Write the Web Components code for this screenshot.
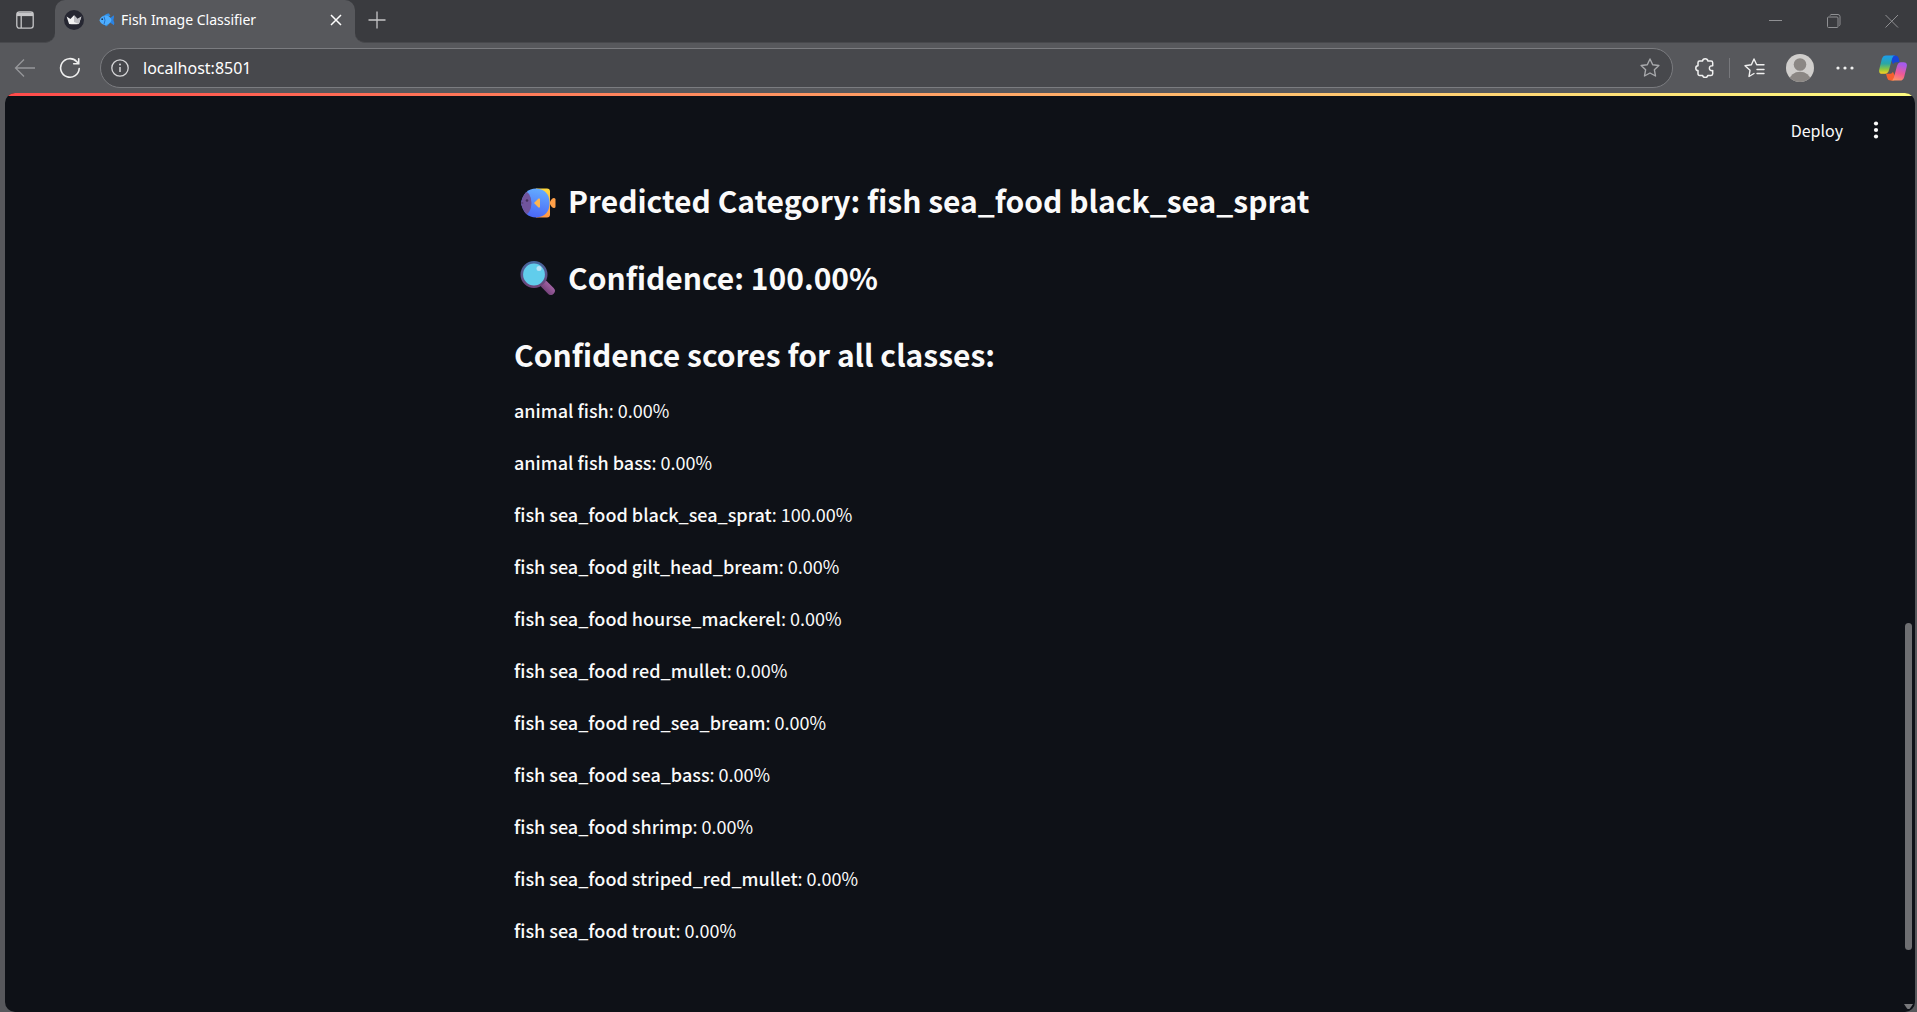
<!DOCTYPE html>
<html lang="en">
<head>
<meta charset="utf-8">
<title>Fish Image Classifier</title>
<style>
  html, body { margin: 0; height: 100%; }
  body { background: #57585c; overflow: hidden; }
</style>
</head>
<body>
<browser-window></browser-window>

<template id="tpl-window">
  <style>
    :host { display: flex; flex-direction: column; height: 100vh; background: #57585c; }
    app-view { flex: 1; min-height: 0; }
  </style>
  <tab-strip></tab-strip>
  <address-bar></address-bar>
  <app-view>
    <result-heading icon="fish">Predicted Category: fish sea_food black_sea_sprat</result-heading>
    <result-heading icon="lens">Confidence: 100.00%</result-heading>
    <result-heading>Confidence scores for all classes:</result-heading>
    <score-list></score-list>
  </app-view>
</template>

<template id="tpl-tabs">
  <style>
    :host { display: flex; height: 43px; background: #57585c; font: 14px/20px "Noto Sans", "Open Sans", sans-serif; color: #fff; }
    button { border: 0; padding: 0; background: none; color: inherit; display: flex; align-items: center; justify-content: center; }
    svg { display: block; flex: none; }
    .left, .right { background: #3a3b3f; box-sizing: border-box; border-bottom: 1px solid #48494d; display: flex; }
    .left { width: 55px; border-bottom-right-radius: 10px; padding: 11px 0 0 16px; align-items: flex-start; }
    .right { flex: 1; border-bottom-left-radius: 10px; justify-content: space-between; align-items: flex-start; }
    .slot { width: 300px; background: linear-gradient(#3a3b3f 50%, #57585c 50%); }
    .tab { height: 100%; box-sizing: border-box; background: #57585c; border-radius: 10px 10px 0 0; display: flex; align-items: center; padding: 0 10px 4px 9px; }
    .tab span { flex: 1; margin-left: 6px; white-space: nowrap; }
    .tab .fish { margin-left: 15px; }
    .plus { margin: 10px 0 0 12px; }
    .controls { display: flex; gap: 44px; padding: 14px 18px 0 0; color: #8f9093; }
  </style>
  <div class="left"><button aria-label="Tab actions">
    <svg width="18" height="18" viewBox="0 0 18 18" fill="none" stroke="#c6c6c8" stroke-width="1.3"><rect x=".8" y=".8" width="16.4" height="16.4" rx="2.6"/><path d="M1 1.5h16v3.6H1z" fill="#c6c6c8" stroke="none"/><path d="M5.2 5v12"/></svg>
  </button></div>
  <div class="slot"><div class="tab">
    <svg width="20" height="20" viewBox="0 0 20 20"><circle cx="10" cy="10" r="10" fill="#262732"/><path d="M2.6 6.6 6.4 9 10 5.2 13.6 9l3.8-2.4-2.5 7.3q-4.9.8-9.8 0z" fill="#f2f2f2"/><path d="m10 5.2 3.6 3.8 3.8-2.4-2.5 7.3-4.9-2z" fill="#bdbdc2"/></svg>
    <svg class="fish" width="16" height="14" viewBox="0 0 16 14"><path d="M5 3Q7 0 10 .6L11.500 3M5 11l2 2.600 3-2" fill="#2f8ee5"/><path d="m10 6 4.800-3.800Q15.500 4 14.400 7q1.400 2.600.5 5.200L10 8.800z" fill="#2b83e2"/><path d="M.4 7.300Q2 2.500 7 2.600q4 .2 5.500 4.500-1.500 4.600-5.500 4.900-5 .1-6.600-4.700" fill="#4daeff"/><path d="M5 3.500q2 3.700 0 7.800" stroke="#2470c8" fill="none"/><circle cx="3.200" cy="6.200" r=".9" fill="#173454"/></svg>
    <span>Fish Image Classifier</span>
    <button aria-label="Close tab"><svg width="18" height="18" viewBox="0 0 18 18" stroke="#fff" stroke-width="1.500"><path d="m4 4 10 10M14 4 4 14"/></svg></button>
  </div></div>
  <div class="right">
    <button class="plus" aria-label="New tab"><svg width="20" height="20" viewBox="0 0 20 20" stroke="#c6c6c8" stroke-width="1.300"><path d="M10 1.500v17M1.500 10h17"/></svg></button>
    <div class="controls">
      <button aria-label="Minimize"><svg width="14" height="14" viewBox="0 0 14 14" stroke="currentColor"><path d="M0 6.500h13"/></svg></button>
      <button aria-label="Restore"><svg width="14" height="14" viewBox="0 0 14 14" fill="none" stroke="currentColor"><rect x=".5" y="3" width="10.500" height="10.500" rx="1"/><path d="M3 1.500q0-.5 1-1h7q2 .2 2 2v8q0 1-1 1"/></svg></button>
      <button aria-label="Close window"><svg width="14" height="14" viewBox="0 0 14 14" stroke="currentColor"><path d="m.5 1 12.500 12.500M13 1 .5 13.500"/></svg></button>
    </div>
  </div>
</template>

<template id="tpl-address">
  <style>
    :host { display: flex; align-items: center; height: 50px; padding: 0 10px 0 14px; font: 16px/24px "Noto Sans", "Open Sans", sans-serif; color: #fff; }
    button { border: 0; padding: 0; background: none; color: inherit; display: flex; flex: none; }
    svg { display: block; flex: none; }
    .reload { margin: 0 19px 0 23px; }
    .box { flex: 1; display: flex; align-items: center; height: 40px; box-sizing: border-box; border: 1px solid #7b7c80; border-radius: 20px; background: #47484c; padding: 0 12px 0 10px; }
    label { display: flex; flex: 1; align-items: center; gap: 14px; }
    input { flex: 1; min-width: 0; border: 0; padding: 0; background: none; color: #fff; font: inherit; outline: 0; height: 24px; }
    .tools { display: flex; align-items: center; margin-left: 22px; }
    .rule { width: 1px; height: 20px; background: #77787c; margin: 0 14px; }
    .avatar { margin: 0 22px 0 21px; }
    .more { margin-right: 25px; }
  </style>
  <button aria-label="Back"><svg width="22" height="20" viewBox="0 0 22 20" fill="none" stroke="#96979a" stroke-width="1.300"><path d="M21 10H1.500M10 1.500 1.500 10l8.500 8.500"/></svg></button>
  <button class="reload" aria-label="Reload"><svg width="22" height="22" viewBox="0 0 22 22" fill="none" stroke="#f0f0f0" stroke-width="1.600" stroke-linecap="round"><path d="M20.200 11.500A9.300 9.300 0 1 1 17.800 4.700l1.800 2M19.700 1.800v5h-5"/></svg></button>
  <div class="box">
    <label><svg width="18" height="18" viewBox="0 0 18 18" fill="none" stroke="#d6d6d8" stroke-width="1.300" role="img" aria-label="Address"><circle cx="9" cy="9" r="8.200"/><path d="M9 8v5" stroke-width="1.500"/><circle cx="9" cy="5.500" r="1" fill="#d6d6d8" stroke="none"/></svg>
    <input type="text" value="localhost:8501" spellcheck="false"></label>
    <button aria-label="Add to favorites"><svg width="20" height="20" viewBox="0 0 20 20" fill="none" stroke="#a8a9ac" stroke-width="1.400" stroke-linejoin="round"><path d="m10 1 2.700 5.700 6.200.8-4.500 4.300 1.100 6.200L10 15l-5.500 3 1.100-6.200L1.100 7.500l6.200-.8z"/></svg></button>
  </div>
  <div class="tools">
    <button aria-label="Extensions"><svg width="20" height="20" viewBox="0 0 20 20" fill="none" stroke="#f0f0f0" stroke-width="1.500" stroke-linejoin="round"><path d="M4.500 3H7.600q.2-2.200 2.600-2.200T12.800 3H16q1.700 0 1.700 1.700v3.100q-3.300-.3-3.300 2.400t3.300 2.400v3.100q0 1.700-1.700 1.700h-3.200q-.2 2.100-2.600 2.100t-2.600-2.100H4.700q-1.700 0-1.700-1.700v-3.100Q.8 12.500.8 10.200T3 7.800V4.700Q3 3 4.500 3z"/></svg></button>
    <span class="rule"></span>
    <button aria-label="Favorites"><svg width="21" height="20" viewBox="0 0 21 20" fill="none" stroke="#f0f0f0" stroke-width="1.400" stroke-linejoin="round" stroke-linecap="round"><path d="M10 15.500 5 18.500l1-6.200L1 7.700l6.400-.9L10 1l2.700 5.800h7.300M13 11.500h7M13 15.500h7"/></svg></button>
    <button class="avatar" aria-label="Profile"><svg width="28" height="28" viewBox="0 0 28 28"><clipPath id="round"><circle cx="14" cy="14" r="14"/></clipPath><g clip-path="url(#round)"><path d="M0 0h28v28H0z" fill="#d0cecc"/><circle cx="14" cy="10.500" r="6.300" fill="#8b8784"/><ellipse cx="14" cy="26" rx="10.500" ry="8.300" fill="#8b8784"/></g></svg></button>
    <button class="more" aria-label="Settings and more"><svg width="18" height="6" viewBox="0 0 18 6" fill="#f0f0f0"><circle cx="2" cy="3" r="1.600"/><circle cx="9" cy="3" r="1.600"/><circle cx="16" cy="3" r="1.600"/></svg></button>
    <button aria-label="Copilot"><svg width="28" height="26" viewBox="0 0 28 26">
      <defs>
        <linearGradient id="cool" x1="0" y1="0" x2="0" y2="1"><stop offset="0" stop-color="#1b9df0"/><stop offset=".45" stop-color="#2aa7a4"/><stop offset=".75" stop-color="#8cc63f"/><stop offset="1" stop-color="#ffd021"/></linearGradient>
        <linearGradient id="warm" x1="0.300" y1="0" x2="0" y2="1"><stop offset="0" stop-color="#a75bea"/><stop offset=".5" stop-color="#f05a94"/><stop offset="1" stop-color="#ffa05c"/></linearGradient>
      </defs>
      <path d="M13 .4h3q3 0 3.800 3.200L20.500 7.200H17q-2.200 0-2.900 2L11 3z" fill="#1745d8"/>
      <path d="M15 25.600H11.500q-2.700 0-3.300-2.600L7 18.800h4.200q2 0 2.700-2l3 6z" fill="#f5602e"/>
      <path d="M7 .4h9.200q-2.200.2-3 2.800L10 15q-1 3.800-3.800 3.800H3.400q-4.100 0-3.100-4.500L2.900 3.800Q4 .4 7 .4z" fill="url(#cool)"/>
      <path d="M21 25.600h-9.200q2.200-.2 3-2.800L18 11q1-3.800 3.800-3.800h2.800q4.100 0 3.100 4.500l-2.600 10.500q-1.100 3.400-4.100 3.400z" fill="url(#warm)"/>
    </svg></button>
  </div>
</template>

<template id="tpl-view">
  <style>
    :host { display: flex; flex-direction: column; margin: 0 2px 0 5px; border-radius: 10px; overflow: hidden; background: #0e1117; color: #fafafa; font-family: "Noto Sans CJK JP", "Noto Sans CJK SC", sans-serif; }
    .stripe { height: 3px; flex: none; background: linear-gradient(90deg, #ff4b4b, #fffd80); }
    .body { flex: 1; display: flex; min-height: 0; }
    .page { flex: 1; display: flex; flex-direction: column; }
    header { display: flex; justify-content: flex-end; align-items: center; gap: 23px; height: 68px; padding: 0 17px 0 0; }
    button { border: 0; padding: 0; background: none; color: inherit; font: 400 16px/24px "Noto Sans CJK JP", sans-serif; }
    svg { display: block; }
    main { width: 880px; max-width: 100%; margin: 0 auto; padding-top: 15px; }
    .scroll { width: 12px; display: flex; flex-direction: column; align-items: center; box-sizing: border-box; padding-right: 1px; }
    .before { flex: 527; }
    .thumb { flex: 327; width: 7px; border-radius: 4px; background: #6e6f72; }
    .after { flex: 54; }
    .scroll svg { margin-bottom: 3px; flex: none; }
  </style>
  <div class="stripe"></div>
  <div class="body">
    <div class="page">
      <header>
        <button>Deploy</button>
        <button aria-label="Main menu"><svg width="20" height="20" viewBox="0 0 20 20" fill="#fafafa"><circle cx="10" cy="3.500" r="2.100"/><circle cx="10" cy="10" r="2.100"/><circle cx="10" cy="16.500" r="2.100"/></svg></button>
      </header>
      <main><slot></slot></main>
    </div>
    <div class="scroll"><div class="before"></div><div class="thumb"></div><div class="after"></div><svg width="9" height="5" viewBox="0 0 9 5"><path d="M0 0h9L6 4.400q-1.500 1-3 0z" fill="#77787b"/></svg></div>
  </div>
</template>

<template id="tpl-heading">
  <style>
    :host { display: block; margin-bottom: 35px; }
    h2 { display: flex; align-items: center; margin: 0; font-size: 30px; line-height: 42px; font-weight: 700; white-space: nowrap; }
    svg { display: none; width: 36px; height: 36px; margin: 0 12px 0 6px; }
    :host([icon="fish"]) .fish, :host([icon="lens"]) .lens { display: block; }
  </style>
  <h2>
    <svg class="fish" viewBox="0 -1 36 36" aria-hidden="true">
      <defs>
        <linearGradient id="fin" x1="0" y1="0" x2="0" y2="1"><stop offset="0" stop-color="#ffda3d"/><stop offset="1" stop-color="#ff9648"/></linearGradient>
        <linearGradient id="blue" x1=".6" y1="0" x2=".4" y2="1"><stop offset="0" stop-color="#64acff"/><stop offset="1" stop-color="#4a66f6"/></linearGradient>
        <clipPath id="fishbody"><path d="M1 20Q4 5.500 16 5.500q13.500 1 13.500 14.500Q29.500 33.500 16 34.500 4 34.500 1 20z"/></clipPath>
      </defs>
      <path d="M16 5.500h11q3 0 3 3v23q0 3-3 3H16z" fill="url(#fin)"/>
      <path d="M29.500 20q2-5 4.500-5 1.500 0 1.500 1.500v7q0 1.500-1.500 1.500-2.500 0-4.500-5z" fill="#ffa048"/>
      <path d="M1 20Q4 5.500 16 5.500q13.500 1 13.500 14.500Q29.500 33.500 16 34.500 4 34.500 1 20z" fill="url(#blue)"/>
      <ellipse cx="4" cy="20" rx="7.500" ry="12" fill="#70549c" clip-path="url(#fishbody)"/>
      <circle cx="7" cy="17.500" r="1.300" fill="#45305e"/><path d="M.5 20q2-1.500 3 0-1 1.500-3 0z" fill="#513b70"/>
      <path d="m14 20 4.500-4.500q1.500-.5 1.500 1v7q0 1.500-1.500 1z" fill="#ffb550"/>
    </svg>
    <svg class="lens" viewBox="0 -1 36 36" aria-hidden="true">
      <defs>
        <linearGradient id="rim" x1="0" y1="0" x2="0" y2="1"><stop offset="0" stop-color="#47669e"/><stop offset="1" stop-color="#6d4478"/></linearGradient>
        <linearGradient id="grip" x1="0" y1="1" x2="1" y2="0"><stop offset="0" stop-color="#74427a"/><stop offset="1" stop-color="#a263a4"/></linearGradient>
      </defs>
      <path d="m24.500 24.500 6.300 6.300" stroke="url(#grip)" stroke-width="8" stroke-linecap="round"/>
      <circle cx="14" cy="14.500" r="12.200" fill="#61cdec" stroke="url(#rim)" stroke-width="2.600"/>
      <circle cx="19" cy="8.500" r="2.500" fill="#b9e2f5"/>
    </svg>
    <span><slot></slot></span>
  </h2>
</template>

<template id="tpl-row">
  <style>
    :host { display: block; }
    p { margin: 0; font-size: 18px; line-height: 32px; }
    strong { font-weight: 500; }
  </style>
  <p><strong><slot name="label"></slot></strong>: <slot></slot></p>
</template>

<script>
  class TemplateElement extends HTMLElement {
    constructor() {
      super();
      const tpl = document.getElementById(this.constructor.template);
      this.attachShadow({ mode: 'open' }).append(tpl.content.cloneNode(true));
    }
  }

  customElements.define('tab-strip', class extends TemplateElement { static template = 'tpl-tabs'; });
  customElements.define('address-bar', class extends TemplateElement { static template = 'tpl-address'; });
  customElements.define('app-view', class extends TemplateElement { static template = 'tpl-view'; });
  customElements.define('result-heading', class extends TemplateElement { static template = 'tpl-heading'; });
  customElements.define('score-row', class extends TemplateElement { static template = 'tpl-row'; });

  customElements.define('score-list', class extends HTMLElement {
    constructor() {
      super();
      const scores = [
        ['animal fish', '0.00%'],
        ['animal fish bass', '0.00%'],
        ['fish sea_food black_sea_sprat', '100.00%'],
        ['fish sea_food gilt_head_bream', '0.00%'],
        ['fish sea_food hourse_mackerel', '0.00%'],
        ['fish sea_food red_mullet', '0.00%'],
        ['fish sea_food red_sea_bream', '0.00%'],
        ['fish sea_food sea_bass', '0.00%'],
        ['fish sea_food shrimp', '0.00%'],
        ['fish sea_food striped_red_mullet', '0.00%'],
        ['fish sea_food trout', '0.00%']
      ];
      this.attachShadow({ mode: 'open' }).innerHTML =
        '<style>:host { display: flex; flex-direction: column; gap: 20px; margin-top: -16px; }</style>' +
        scores.map(([name, value]) => `<score-row><span slot="label">${name}</span>${value}</score-row>`).join('');
    }
  });

  customElements.define('browser-window', class extends TemplateElement { static template = 'tpl-window'; });
</script>
</body>
</html>
